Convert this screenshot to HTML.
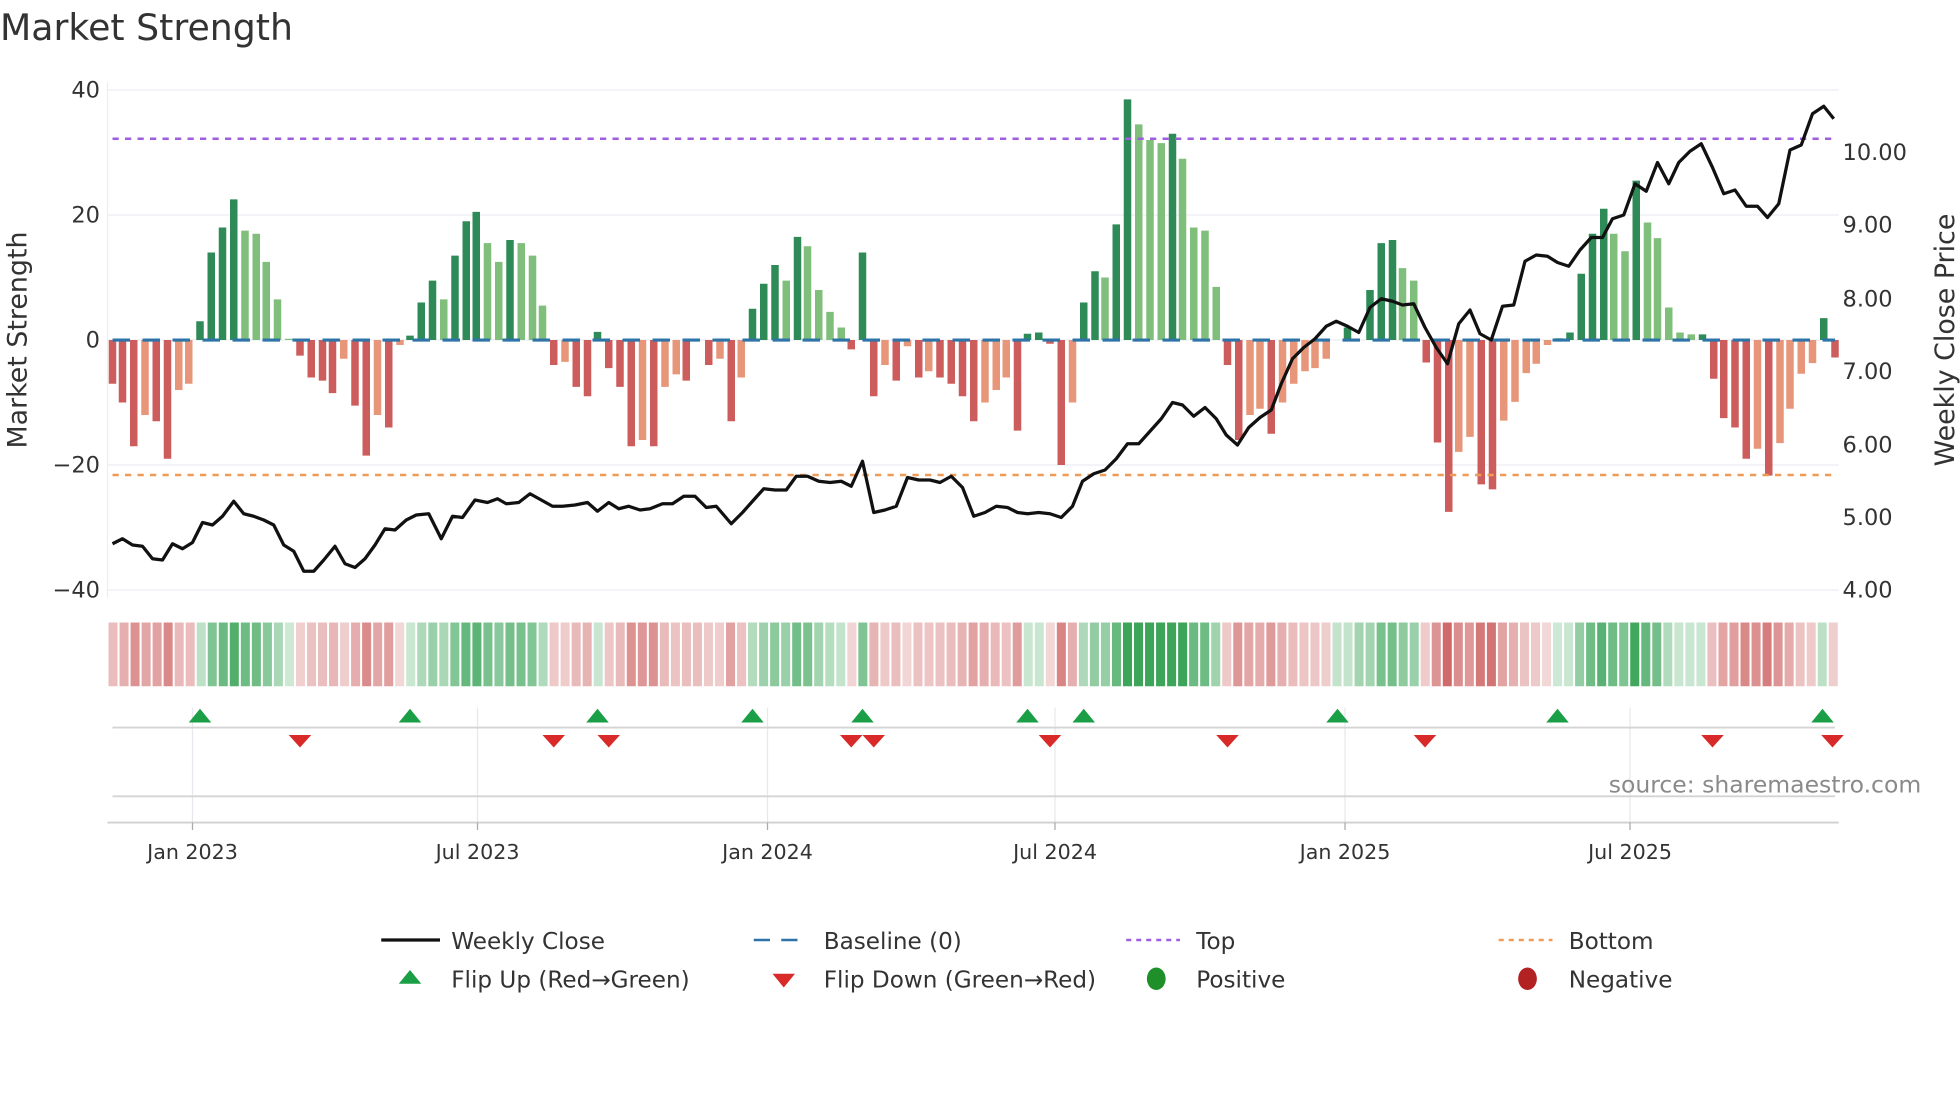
<!DOCTYPE html>
<html><head><meta charset="utf-8">
<style>
html,body{margin:0;padding:0;background:#fff;width:1960px;height:1102px;overflow:hidden}
svg{display:block}
text{font-family:"DejaVu Sans","Liberation Sans",sans-serif}
</style></head>
<body>
<svg id="s" width="1960" height="1102" viewBox="0 0 1568 881.6" xmlns="http://www.w3.org/2000/svg">
<text x="0" y="32" font-size="29" fill="#333">Market Strength</text>
<g stroke="#eceef2" stroke-width="1">
<line x1="86" y1="72" x2="1471" y2="72"/><line x1="86" y1="172" x2="1471" y2="172"/>
<line x1="86" y1="272" x2="1471" y2="272"/><line x1="86" y1="372" x2="1471" y2="372"/>
<line x1="86" y1="472" x2="1471" y2="472"/><line x1="86" y1="66" x2="86" y2="478"/>
</g>
<g font-size="18" fill="#333" text-anchor="end">
<text x="80" y="78">40</text><text x="80" y="178">20</text><text x="80" y="278">0</text>
<text x="80" y="378">−20</text><text x="80" y="478">−40</text>
</g>
<g font-size="18" fill="#333">
<text x="1474" y="128">10.00</text><text x="1474" y="186">9.00</text><text x="1474" y="245">8.00</text>
<text x="1474" y="303">7.00</text><text x="1474" y="362">6.00</text><text x="1474" y="420">5.00</text><text x="1474" y="478">4.00</text>
</g>
<text transform="translate(21,272) rotate(-90)" font-size="21.5" fill="#333" text-anchor="middle">Market Strength</text>
<text transform="translate(1563,272) rotate(-90)" font-size="21.5" fill="#333" text-anchor="middle">Weekly Close Price</text>
<g id="bars"></g>
<line x1="90" y1="272" x2="1468" y2="272" stroke="#2e74a8" stroke-width="2.5" stroke-dasharray="14,10"/>
<line x1="90" y1="111" x2="1468" y2="111" stroke="#9d5ee0" stroke-width="2" stroke-dasharray="5,5"/>
<line x1="90" y1="380" x2="1468" y2="380" stroke="#ef9a55" stroke-width="2" stroke-dasharray="5,5"/>
<polyline id="price" fill="none" stroke="#111" stroke-width="2.6" stroke-linejoin="round"/>
<g id="strip"></g>
<g stroke="#e6e8ee" stroke-width="1">
<line x1="154" y1="566" x2="154" y2="658"/><line x1="382" y1="566" x2="382" y2="658"/><line x1="614" y1="566" x2="614" y2="658"/>
<line x1="844" y1="566" x2="844" y2="658"/><line x1="1076" y1="566" x2="1076" y2="658"/><line x1="1304" y1="566" x2="1304" y2="658"/>
</g>
<line x1="90" y1="582" x2="1468" y2="582" stroke="#d4d4d4" stroke-width="1.5"/>
<line x1="90" y1="637" x2="1468" y2="637" stroke="#d4d4d4" stroke-width="1.5"/>
<line x1="86" y1="658" x2="1471" y2="658" stroke="#d0d0d0" stroke-width="1.5"/>
<g id="flips"></g>
<text x="1537" y="634" font-size="18.8" fill="#8a8a8a" text-anchor="end">source: sharemaestro.com</text>
<g stroke="#aaa" stroke-width="1"><line x1="154" y1="658" x2="154" y2="664"/><line x1="382" y1="658" x2="382" y2="664"/><line x1="614" y1="658" x2="614" y2="664"/><line x1="844" y1="658" x2="844" y2="664"/><line x1="1076" y1="658" x2="1076" y2="664"/><line x1="1304" y1="658" x2="1304" y2="664"/></g>
<g font-size="16.5" fill="#333" text-anchor="middle">
<text x="154" y="687">Jan 2023</text><text x="382" y="687">Jul 2023</text><text x="614" y="687">Jan 2024</text>
<text x="844" y="687">Jul 2024</text><text x="1076" y="687">Jan 2025</text><text x="1304" y="687">Jul 2025</text>
</g>
<g font-size="18.5" fill="#333">
<line x1="305" y1="752" x2="352" y2="752" stroke="#111" stroke-width="2.6"/><text x="361" y="759">Weekly Close</text>
<line x1="603" y1="752" x2="645" y2="752" stroke="#2e74a8" stroke-width="2" stroke-dasharray="13,9"/><text x="659" y="759">Baseline (0)</text>
<line x1="901" y1="752" x2="944" y2="752" stroke="#9d5ee0" stroke-width="2" stroke-dasharray="4,4"/><text x="957" y="759">Top</text>
<line x1="1199" y1="752" x2="1242" y2="752" stroke="#ef9a55" stroke-width="2" stroke-dasharray="4,4"/><text x="1255" y="759">Bottom</text>
<polygon points="319,787 337,787 328,776" fill="#1a9e46"/><text x="361" y="790">Flip Up (Red→Green)</text>
<polygon points="618,779 636,779 627,790" fill="#d92a2a"/><text x="659" y="790">Flip Down (Green→Red)</text>
<ellipse cx="925" cy="783" rx="7.5" ry="9" fill="#1f8f2a"/><text x="957" y="790">Positive</text>
<ellipse cx="1222" cy="783" rx="7.5" ry="9" fill="#b22222"/><text x="1255" y="790">Negative</text>
</g>
</svg>
<script>
var NS="http://www.w3.org/2000/svg";
function el(t,a,p){var e=document.createElementNS(NS,t);for(var k in a)e.setAttribute(k,a[k]);p.appendChild(e);return e;}
var B=[[90,-7,'R'],[98,-10,'R'],[107,-17,'R'],[116,-12,'S'],[125,-13,'R'],[134,-19,'R'],[143,-8,'S'],[151,-7,'S'],[160,3,'D'],[169,14,'D'],[178,18,'D'],[187,22.5,'D'],[196,17.5,'L'],[205,17,'L'],[213,12.5,'L'],[222,6.5,'L'],[231,0.2,'L'],[240,-2.5,'R'],[249,-6,'R'],[258,-6.5,'R'],[266,-8.5,'R'],[275,-3,'S'],[284,-10.5,'R'],[293,-18.5,'R'],[302,-12,'S'],[311,-14,'R'],[320,-0.8,'S'],[328,0.7,'D'],[337,6,'D'],[346,9.5,'D'],[355,6.5,'L'],[364,13.5,'D'],[373,19,'D'],[381,20.5,'D'],[390,15.5,'L'],[399,12.5,'L'],[408,16,'D'],[417,15.5,'L'],[426,13.5,'L'],[434,5.5,'L'],[443,-4,'R'],[452,-3.5,'S'],[461,-7.5,'R'],[470,-9,'R'],[478,1.3,'D'],[487,-4.5,'R'],[496,-7.5,'R'],[505,-17,'R'],[514,-16,'S'],[523,-17,'R'],[532,-7.5,'S'],[541,-5.5,'S'],[549,-6.5,'R'],[567,-4,'R'],[576,-3,'S'],[585,-13,'R'],[593,-6,'S'],[602,5,'D'],[611,9,'D'],[620,12,'D'],[629,9.5,'L'],[638,16.5,'D'],[646,15,'L'],[655,8,'L'],[664,4.5,'L'],[673,2,'L'],[681,-1.5,'R'],[690,14,'D'],[699,-9,'R'],[708,-4,'S'],[717,-6.5,'R'],[726,-1,'S'],[735,-6,'R'],[743,-5,'S'],[752,-6,'R'],[761,-7,'R'],[770,-9,'R'],[779,-13,'R'],[788,-10,'S'],[797,-8,'S'],[805,-6,'S'],[814,-14.5,'R'],[822,1,'D'],[831,1.2,'D'],[840,-0.6,'R'],[849,-20,'R'],[858,-10,'S'],[867,6,'D'],[876,11,'D'],[884,10,'L'],[893,18.5,'D'],[902,38.5,'D'],[911,34.5,'L'],[920,32,'L'],[929,31.5,'L'],[938,33,'D'],[946,29,'L'],[955,18,'L'],[964,17.5,'L'],[973,8.5,'L'],[982,-4,'R'],[991,-16,'R'],[1000,-12,'S'],[1008,-11,'S'],[1017,-15,'R'],[1026,-10,'S'],[1035,-7,'S'],[1044,-5,'S'],[1052,-4.5,'S'],[1061,-3,'S'],[1078,2,'D'],[1096,8,'D'],[1105,15.5,'D'],[1114,16,'D'],[1122,11.5,'L'],[1131,9.5,'L'],
[1141,-3.6,'R'],[1150,-16.4,'R'],[1159,-27.5,'R'],[1167,-17.9,'S'],[1176,-15.5,'S'],[1185,-23.1,'R'],[1194,-23.9,'R'],[1203,-12.9,'S'],[1212,-9.9,'S'],[1221,-5.3,'S'],[1229,-3.8,'S'],[1238,-0.8,'S'],[1247,0.3,'L'],[1256,1.2,'D'],[1265,10.6,'D'],[1274,17,'D'],[1283,21,'D'],[1291,17,'L'],[1300,14.2,'L'],[1309,25.5,'D'],[1318,18.8,'L'],[1326,16.3,'L'],[1335,5.2,'L'],[1344,1.2,'L'],[1353,0.9,'L'],[1362,0.9,'D'],[1371,-6.2,'R'],[1379,-12.5,'R'],[1388,-14,'R'],[1397,-19,'R'],[1406,-17.4,'S'],[1415,-21.7,'R'],[1424,-16.5,'S'],[1432,-11,'S'],[1441,-5.4,'S'],[1450,-3.7,'S'],[1459,3.5,'D'],[1468,-2.8,'R']];
var C={D:'#2e8b57',L:'#80bf7b',R:'#cd5c5c',S:'#e8967a'};
var g=document.getElementById('bars');
B.forEach(function(b){
  var x=b[0], v=b[1]*5;
  el('rect',{x:x-3,y:v>0?272-v:272,width:6,height:Math.abs(v),fill:C[b[2]]},g);
});
var s=document.getElementById('strip');var n=157,w=1385/n;
for(var i=0;i<n;i++){
  var x=86+i*w, cx=x+w/2, best=B[0];
  B.forEach(function(b){if(Math.abs(b[0]-cx)<Math.abs(best[0]-cx))best=b;});
  var v=best[1], a=Math.min(1,0.25+Math.abs(v)/35);
  var col=v>=0?'rgba(60,165,90,'+a+')':'rgba(200,80,80,'+a*0.85+')';
  el('rect',{x:x+0.8,y:498,width:w-1.6,height:51,fill:col},s);
}
var P="90,435 98,431 106,436 114,437 122,447 130,448 138,435 146,439 154,434 162,418 170,420 178,413 187,401 195,411 203,413 211,416 219,420 227,436 235,441 243,457 251,457 259,448 268,437 276,451 284,454 292,447 300,436 308,423 316,424 325,416 333,412 343,411 353,431 362,413 370,414 380,400 390,402 398,399 405,403 415,402 424,395 433,400 442,405 450,405 460,404 470,402 478,409 487,402 495,407 503,405 512,408 520,407 530,403 538,403 547,397 556,397 565,406 573,405 585,419 594,410 602,401 611,391 620,392 629,392 637,381 646,381 655,385 664,386 673,385 681,389 690,369 699,410 708,408 717,405 726,382 735,384 744,384 752,386 761,381 770,390 779,413 788,410 797,405 806,406 814,410 822,411 831,410 840,411 849,414 858,405 866,385 875,379 884,376 893,367 902,355 911,355 920,345 929,335 938,322 946,324 955,333 964,326 973,335 981,348 990,356 999,342 1008,334 1017,328 1025,307 1034,287 1043,278 1052,271 1061,261 1069,257 1078,261 1087,266 1096,246 1105,239 1114,241 1122,244 1131,243 1140,262 1149,278 1158,291 1167,259 1176,248 1184,267 1193,272 1202,245 1211,244 1220,209 1229,204 1238,205 1246,210 1255,213 1264,200 1273,190 1282,190 1290,175 1299,172 1308,147 1317,153 1326,130 1335,147 1343,130 1352,121 1361,115 1370,134 1379,155 1388,152 1397,165 1406,165 1414,174 1423,163 1432,120 1441,116 1450,91 1459,85 1467,95";
document.getElementById('price').setAttribute('points',P);
var f=document.getElementById('flips');
[160,328,478,602,690,822,867,1070,1246,1458].forEach(function(x){el('polygon',{points:(x-9)+',578 '+(x+9)+',578 '+x+',567',fill:'#1a9e46'},f);});
[240,443,487,681,699,840,982,1140,1370,1466].forEach(function(x){el('polygon',{points:(x-9)+',588 '+(x+9)+',588 '+x+',598',fill:'#d92a2a'},f);});
</script>
</body></html>
